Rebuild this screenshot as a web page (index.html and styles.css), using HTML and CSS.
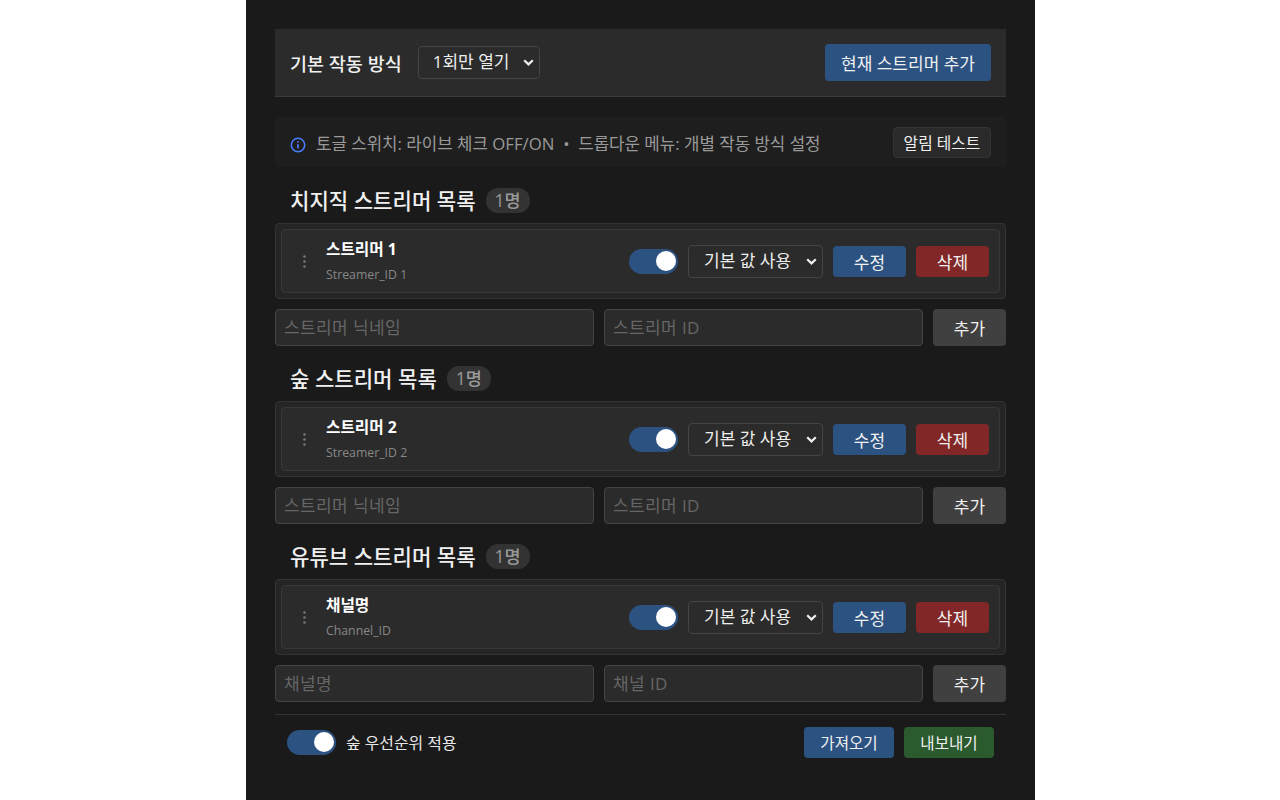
FILE: index.html
```html
<!DOCTYPE html>
<html lang="ko">
<head>
    <meta charset="UTF-8">
    <meta name="viewport" content="width=device-width, initial-scale=1.0">
    <title>스트리머 설정</title>
    <link rel="stylesheet" href="styles.css">
</head>
<body>
    <div class="panel">
        <div class="top-bar">
            <div class="top-left">
                <span class="top-label">기본 작동 방식</span>
                <select class="mode-select top-select">
                    <option>1회만 열기</option>
                </select>
            </div>
            <button class="btn btn-blue btn-add-current">현재 스트리머 추가</button>
        </div>

        <div class="info-bar">
            <div class="info-text">
                <svg class="info-icon" viewBox="0 0 16 16" width="16" height="16" fill="none" stroke="#4a7dff" stroke-width="1.5">
                    <circle cx="8" cy="8" r="6.7"/>
                    <path d="M8 7.2v4" stroke-width="1.7"/>
                    <path d="M8 4.2v1.6" stroke-width="1.7"/>
                </svg>
                <span class="info-copy">토글 스위치: 라이브 체크 OFF/ON &nbsp;•&nbsp; 드롭다운 메뉴: 개별 작동 방식 설정</span>
            </div>
            <button class="btn btn-dark">알림 테스트</button>
        </div>

        <!-- 치지직 -->
        <div class="section">
            <div class="section-title">
                <h2>치지직 스트리머 목록</h2>
                <span class="count">1명</span>
            </div>
            <div class="list">
                <div class="item">
                    <span class="handle">
                        <svg viewBox="0 0 3 13" width="3" height="13" fill="#777"><circle cx="1.5" cy="1.5" r="1.3"/><circle cx="1.5" cy="6.5" r="1.3"/><circle cx="1.5" cy="11.5" r="1.3"/></svg>
                    </span>
                    <div class="item-info">
                        <div class="item-name">스트리머 1</div>
                        <div class="item-id">Streamer_ID 1</div>
                    </div>
                    <div class="item-controls">
                        <span class="toggle"></span>
                        <select class="mode-select"><option>기본 값 사용</option></select>
                        <button class="btn btn-blue btn-small">수정</button>
                        <button class="btn btn-red btn-small">삭제</button>
                    </div>
                </div>
            </div>
            <div class="add-row">
                <input type="text" placeholder="스트리머 닉네임">
                <input type="text" placeholder="스트리머 ID">
                <button class="btn btn-gray">추가</button>
            </div>
        </div>

        <!-- 숲 -->
        <div class="section">
            <div class="section-title">
                <h2>숲 스트리머 목록</h2>
                <span class="count">1명</span>
            </div>
            <div class="list">
                <div class="item">
                    <span class="handle">
                        <svg viewBox="0 0 3 13" width="3" height="13" fill="#777"><circle cx="1.5" cy="1.5" r="1.3"/><circle cx="1.5" cy="6.5" r="1.3"/><circle cx="1.5" cy="11.5" r="1.3"/></svg>
                    </span>
                    <div class="item-info">
                        <div class="item-name">스트리머 2</div>
                        <div class="item-id">Streamer_ID 2</div>
                    </div>
                    <div class="item-controls">
                        <span class="toggle"></span>
                        <select class="mode-select"><option>기본 값 사용</option></select>
                        <button class="btn btn-blue btn-small">수정</button>
                        <button class="btn btn-red btn-small">삭제</button>
                    </div>
                </div>
            </div>
            <div class="add-row">
                <input type="text" placeholder="스트리머 닉네임">
                <input type="text" placeholder="스트리머 ID">
                <button class="btn btn-gray">추가</button>
            </div>
        </div>

        <!-- 유튜브 -->
        <div class="section">
            <div class="section-title">
                <h2>유튜브 스트리머 목록</h2>
                <span class="count">1명</span>
            </div>
            <div class="list">
                <div class="item">
                    <span class="handle">
                        <svg viewBox="0 0 3 13" width="3" height="13" fill="#777"><circle cx="1.5" cy="1.5" r="1.3"/><circle cx="1.5" cy="6.5" r="1.3"/><circle cx="1.5" cy="11.5" r="1.3"/></svg>
                    </span>
                    <div class="item-info">
                        <div class="item-name">채널명</div>
                        <div class="item-id">Channel_ID</div>
                    </div>
                    <div class="item-controls">
                        <span class="toggle"></span>
                        <select class="mode-select"><option>기본 값 사용</option></select>
                        <button class="btn btn-blue btn-small">수정</button>
                        <button class="btn btn-red btn-small">삭제</button>
                    </div>
                </div>
            </div>
            <div class="add-row">
                <input type="text" placeholder="채널명">
                <input type="text" placeholder="채널 ID">
                <button class="btn btn-gray">추가</button>
            </div>
        </div>

        <div class="footer">
            <div class="footer-left">
                <span class="toggle"></span>
                <span class="footer-label">숲 우선순위 적용</span>
            </div>
            <div class="footer-right">
                <button class="btn btn-blue btn-footer">가져오기</button>
                <button class="btn btn-green btn-footer">내보내기</button>
            </div>
        </div>
    </div>
</body>
</html>
```

FILE: styles.css
```css
* {
    margin: 0;
    padding: 0;
    box-sizing: border-box;
    font-family: 'Open Sans', 'Noto Sans CJK KR', sans-serif;
}

body {
    background-color: #fff;
}

.panel {
    width: 789px;
    height: 800px;
    margin-left: 246px;
    padding: 29px 29px 0;
    background-color: #1a1a1a;
    color: #e8e8e8;
}

.top-bar {
    display: flex;
    justify-content: space-between;
    align-items: center;
    height: 68px;
    padding: 0 15px;
    background-color: #2b2b2b;
    border-bottom: 1px solid #3a3a3a;
}

.top-left {
    display: flex;
    align-items: center;
    gap: 16px;
}

.top-label {
    font-size: 18.5px;
    font-weight: 500;
    color: #f0f0f0;
}

.mode-select {
    appearance: none;
    width: 135px;
    height: 33px;
    padding: 0 8px 2px 15px;
    font-size: 17px;
    color: #eee;
    background-color: #2b2b2b;
    background-image: url("data:image/svg+xml,%3Csvg xmlns='http://www.w3.org/2000/svg' viewBox='0 0 11 7'%3E%3Cpath d='M1.2 1.2 5.5 5.4 9.8 1.2' fill='none' stroke='%23eee' stroke-width='2.2'/%3E%3C/svg%3E");
    background-repeat: no-repeat;
    background-position: right 5px center;
    background-size: 11px 7px;
    border: 1px solid #444;
    border-radius: 4px;
}

.top-select {
    width: 122px;
    padding-left: 14px;
}

.btn {
    border: none;
    border-radius: 4px;
    color: #f0f0f0;
    font-size: 17px;
    cursor: pointer;
}

.btn-blue {
    background-color: #2c5282;
}

.btn-red {
    background-color: #822727;
}

.btn-green {
    background-color: #2a5a2e;
}

.btn-gray {
    width: 73px;
    background-color: #404040;
}

.btn-add-current {
    width: 166px;
    height: 37px;
}

.btn-dark {
    width: 98px;
    height: 31px;
    font-size: 15.8px;
    background-color: #2a2a2a;
    border: 1px solid #333;
}

.btn-small {
    width: 73px;
    height: 31px;
}

.btn-footer {
    width: 90px;
    height: 31px;
    font-size: 15.6px;
}

.info-bar {
    display: flex;
    justify-content: space-between;
    align-items: center;
    height: 50px;
    margin-top: 20px;
    margin-bottom: 21px;
    padding: 0 15px;
    background-color: #1e1e1e;
    border-radius: 4px;
}

.info-text {
    display: flex;
    align-items: center;
    gap: 10px;
    font-size: 16.8px;
    color: #999;
}

.info-icon {
    margin-top: 5px;
}

.info-copy {
    margin-top: 1px;
}

.section {
    margin-top: 20px;
}

.section-title {
    display: flex;
    align-items: center;
    gap: 10px;
    height: 25px;
    padding-left: 15px;
}

.section-title h2 {
    margin-top: -2px;
    font-size: 21.1px;
    font-weight: 500;
    color: #f0f0f0;
}

.count {
    width: 44px;
    height: 25px;
    line-height: 25px;
    text-align: center;
    font-size: 17.5px;
    font-weight: 500;
    color: #999;
    background-color: #333;
    border-radius: 12px;
}

.list {
    margin-top: 10px;
    padding: 5px;
    height: 76px;
    background-color: #252525;
    border: 1px solid #333;
    border-radius: 4px;
}

.item {
    display: flex;
    align-items: center;
    height: 64px;
    padding: 0 10px 0 15px;
    background-color: #2b2b2b;
    border: 1px solid #383838;
    border-radius: 4px;
}

.handle {
    display: flex;
    width: 29px;
    padding-left: 6px;
}

.item-info {
    flex: 1;
    padding-top: 2px;
}

.item-name {
    font-size: 15.7px;
    font-weight: 700;
    color: #fff;
    margin-top: -4px;
}

.item-id {
    margin-top: 6px;
    font-size: 12.3px;
    color: #888;
}

.item-controls {
    display: flex;
    align-items: center;
    gap: 10px;
}

.toggle {
    position: relative;
    display: block;
    width: 49px;
    height: 25px;
    background-color: #2c5282;
    border-radius: 13px;
}

.toggle::after {
    content: '';
    position: absolute;
    top: 2.5px;
    right: 2.5px;
    width: 20px;
    height: 20px;
    background-color: #fff;
    border-radius: 50%;
}

.add-row {
    display: flex;
    gap: 10px;
    margin-top: 10px;
}

.add-row input {
    flex: 1;
    min-width: 0;
    height: 37px;
    padding: 0 8px;
    font-size: 17px;
    letter-spacing: 0.4px;
    color: #eee;
    background-color: #2b2b2b;
    border: 1px solid #444;
    border-radius: 4px;
}

.add-row input::placeholder {
    color: #666;
}

.footer {
    display: flex;
    justify-content: space-between;
    align-items: center;
    height: 55px;
    margin-top: 12px;
    padding: 0 12px;
    border-top: 1px solid #333;
}

.footer-left {
    display: flex;
    align-items: center;
    gap: 10px;
}

.footer-label {
    font-size: 15.9px;
    color: #e8e8e8;
}

.footer-right {
    display: flex;
    gap: 10px;
}
```
